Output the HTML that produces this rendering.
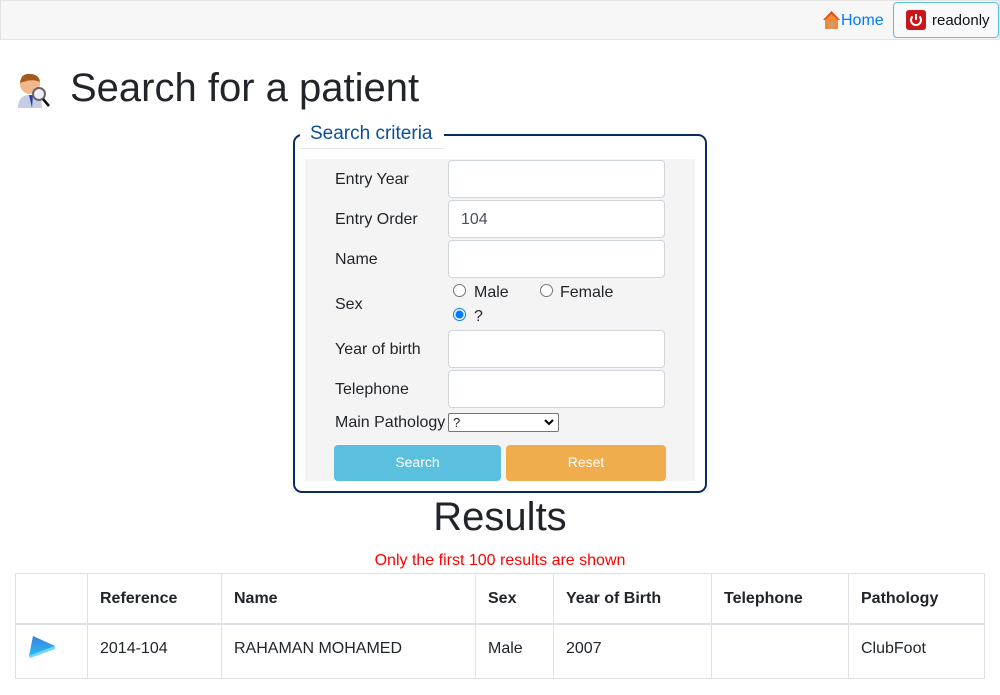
<!DOCTYPE html>
<html><head><meta charset="utf-8"><style>
*{box-sizing:border-box;margin:0;padding:0}
body{width:1000px;height:695px;overflow:hidden;background:#fff;font-family:"Liberation Sans",sans-serif;color:#212529;position:relative;font-size:16px}
.a{position:absolute}
.nav{left:0;top:0;width:1000px;height:40px;background:#f7f7f7;border:1px solid #e3e3e3}
.inp{position:absolute;left:448px;width:217px;height:38px;background:#fff;border:1px solid #ced4da;border-radius:4px;font-size:16px;color:#495057;padding:9px 12px}
.lbl{position:absolute;left:335px;font-size:16px;line-height:20px}
.radio{position:absolute;width:13px;height:13px;border:1px solid #767676;border-radius:50%;background:#fff}
table{position:absolute;left:15px;top:573px;width:970px;border-collapse:collapse;font-size:16px}
td,th{border:1px solid #dee2e6;padding:0 12px;text-align:left;vertical-align:middle}
th{height:50px;font-weight:bold;border-bottom:2px solid #dee2e6;padding-top:1px}
td{height:55px;padding-bottom:4px}
</style></head><body>
<div class="a nav"></div>
<svg class="a" style="left:822px;top:10px" width="19" height="20" viewBox="0 0 19 20"><path d="M9.5 1 L1 10 L3 10 L3 19 L16 19 L16 10 L18 10 Z" fill="#f08a3a"/><path d="M9.5 1 L1 10 L3 10 L9.5 4 L16 10 L18 10Z" fill="#d9531e"/><rect x="7" y="12" width="5" height="7" fill="#c8a070"/></svg>
<div class="a" style="left:841px;top:11px;color:#007bff;font-size:16px;line-height:20px">Home</div>
<div class="a" style="left:893px;top:2px;width:106px;height:36px;border:1px solid #5bc0de;border-radius:4px;background:#f8f9fa"></div>
<svg class="a" style="left:906px;top:10px" width="20" height="20" viewBox="0 0 20 20"><rect x="0" y="0" width="20" height="20" rx="3" fill="#c9161c"/><path d="M6.5 6.5 A5 5 0 1 0 13.5 6.5" stroke="#fff" stroke-width="2" fill="none"/><line x1="10" y1="4" x2="10" y2="10" stroke="#fff" stroke-width="2"/></svg>
<div class="a" style="left:932px;top:11px;font-size:15px;line-height:20px;color:#111">readonly</div>

<svg class="a" style="left:16px;top:72px" width="35" height="37" viewBox="0 0 35 37"><path d="M2 36 Q2 24 12 23 L20 23 Q26 25 26 36Z" fill="#c5cde6"/><path d="M13 23 L16 36 L17 23Z" fill="#2a3f9e"/><circle cx="14" cy="12" r="10" fill="#f1b98a"/><path d="M4 11 Q5 1 14 2 Q23 2 24 10 Q16 6 4 11Z" fill="#a45a1c"/><circle cx="23" cy="22" r="6" fill="#eef" stroke="#666" stroke-width="2"/><line x1="27" y1="27" x2="33" y2="34" stroke="#111" stroke-width="2.5"/></svg>
<div class="a" style="left:70px;top:64px;font-size:40px;line-height:48px">Search for a patient</div>

<div class="a" style="left:293px;top:134px;width:414px;height:359px;border:2px solid #0a2a66;border-radius:9px"></div>
<div class="a" style="left:300px;top:120px;width:144px;height:29px;background:#fff;border-bottom:1px solid #e5e5e5"></div>
<div class="a" style="left:310px;top:123px;font-size:19px;line-height:22px;color:#0b4f96">Search criteria</div>
<div class="a" style="left:305px;top:159px;width:390px;height:322px;background:#f4f4f4"></div>

<div class="lbl" style="top:170px">Entry Year</div><div class="inp" style="top:160px"></div>
<div class="lbl" style="top:210px">Entry Order</div><div class="inp" style="top:200px;padding-top:10px">104</div>
<div class="lbl" style="top:250px">Name</div><div class="inp" style="top:240px"></div>
<div class="lbl" style="top:295px">Sex</div>
<div class="radio" style="left:453px;top:284px"></div><div class="a" style="left:474px;top:283px;line-height:20px">Male</div>
<div class="radio" style="left:540px;top:284px"></div><div class="a" style="left:560px;top:283px;line-height:20px">Female</div>
<div class="radio" style="left:453px;top:308px;border:1px solid #007bff;background:radial-gradient(circle,#007bff 3.5px,#fff 4.5px)"></div><div class="a" style="left:474px;top:307px;line-height:20px">?</div>
<div class="lbl" style="top:340px">Year of birth</div><div class="inp" style="top:330px"></div>
<div class="lbl" style="top:380px">Telephone</div><div class="inp" style="top:370px"></div>
<div class="lbl" style="top:413px">Main Pathology</div>
<div class="a" style="left:448px;top:413px;width:111px;height:19px;border:1px solid #767676;border-radius:2px;background:#fff;font-size:13px;line-height:17px;padding-left:4px">?<svg style="position:absolute;right:4px;top:5px" width="10" height="7" viewBox="0 0 10 7"><path d="M1 1 L5 5 L9 1" stroke="#000" stroke-width="2" fill="none"/></svg></div>
<div class="a" style="left:334px;top:445px;width:167px;height:36px;background:#5bc0de;border-radius:4px;color:#fff;font-size:14px;text-align:center;line-height:34px">Search</div>
<div class="a" style="left:506px;top:445px;width:160px;height:36px;background:#f0ad4e;border-radius:4px;color:#fff;font-size:14px;text-align:center;line-height:34px">Reset</div>

<div class="a" style="left:0;top:491px;width:1000px;text-align:center;font-size:40px;line-height:52px">Results</div>
<div class="a" style="left:0;top:551px;width:1000px;text-align:center;color:#f00;font-size:16px;line-height:20px">Only the first 100 results are shown</div>

<table>
<tr><th style="width:72px"></th><th style="width:134px">Reference</th><th style="width:254px">Name</th><th style="width:78px">Sex</th><th style="width:158px">Year of Birth</th><th style="width:137px">Telephone</th><th>Pathology</th></tr>
<tr><td><svg width="28" height="26" viewBox="0 0 28 26"><defs><linearGradient id="g" x1="0" y1="0" x2="0" y2="1"><stop offset="0" stop-color="#3b7fe0"/><stop offset="1" stop-color="#29c0f0"/></linearGradient></defs><path d="M5 2 L27 12 L1 22Z" fill="url(#g)"/><path d="M1 22 L27 12 L27 15 L2 24Z" fill="#6fd6ff"/></svg></td><td>2014-104</td><td>RAHAMAN MOHAMED</td><td>Male</td><td>2007</td><td></td><td>ClubFoot</td></tr>
</table>
</body></html>
